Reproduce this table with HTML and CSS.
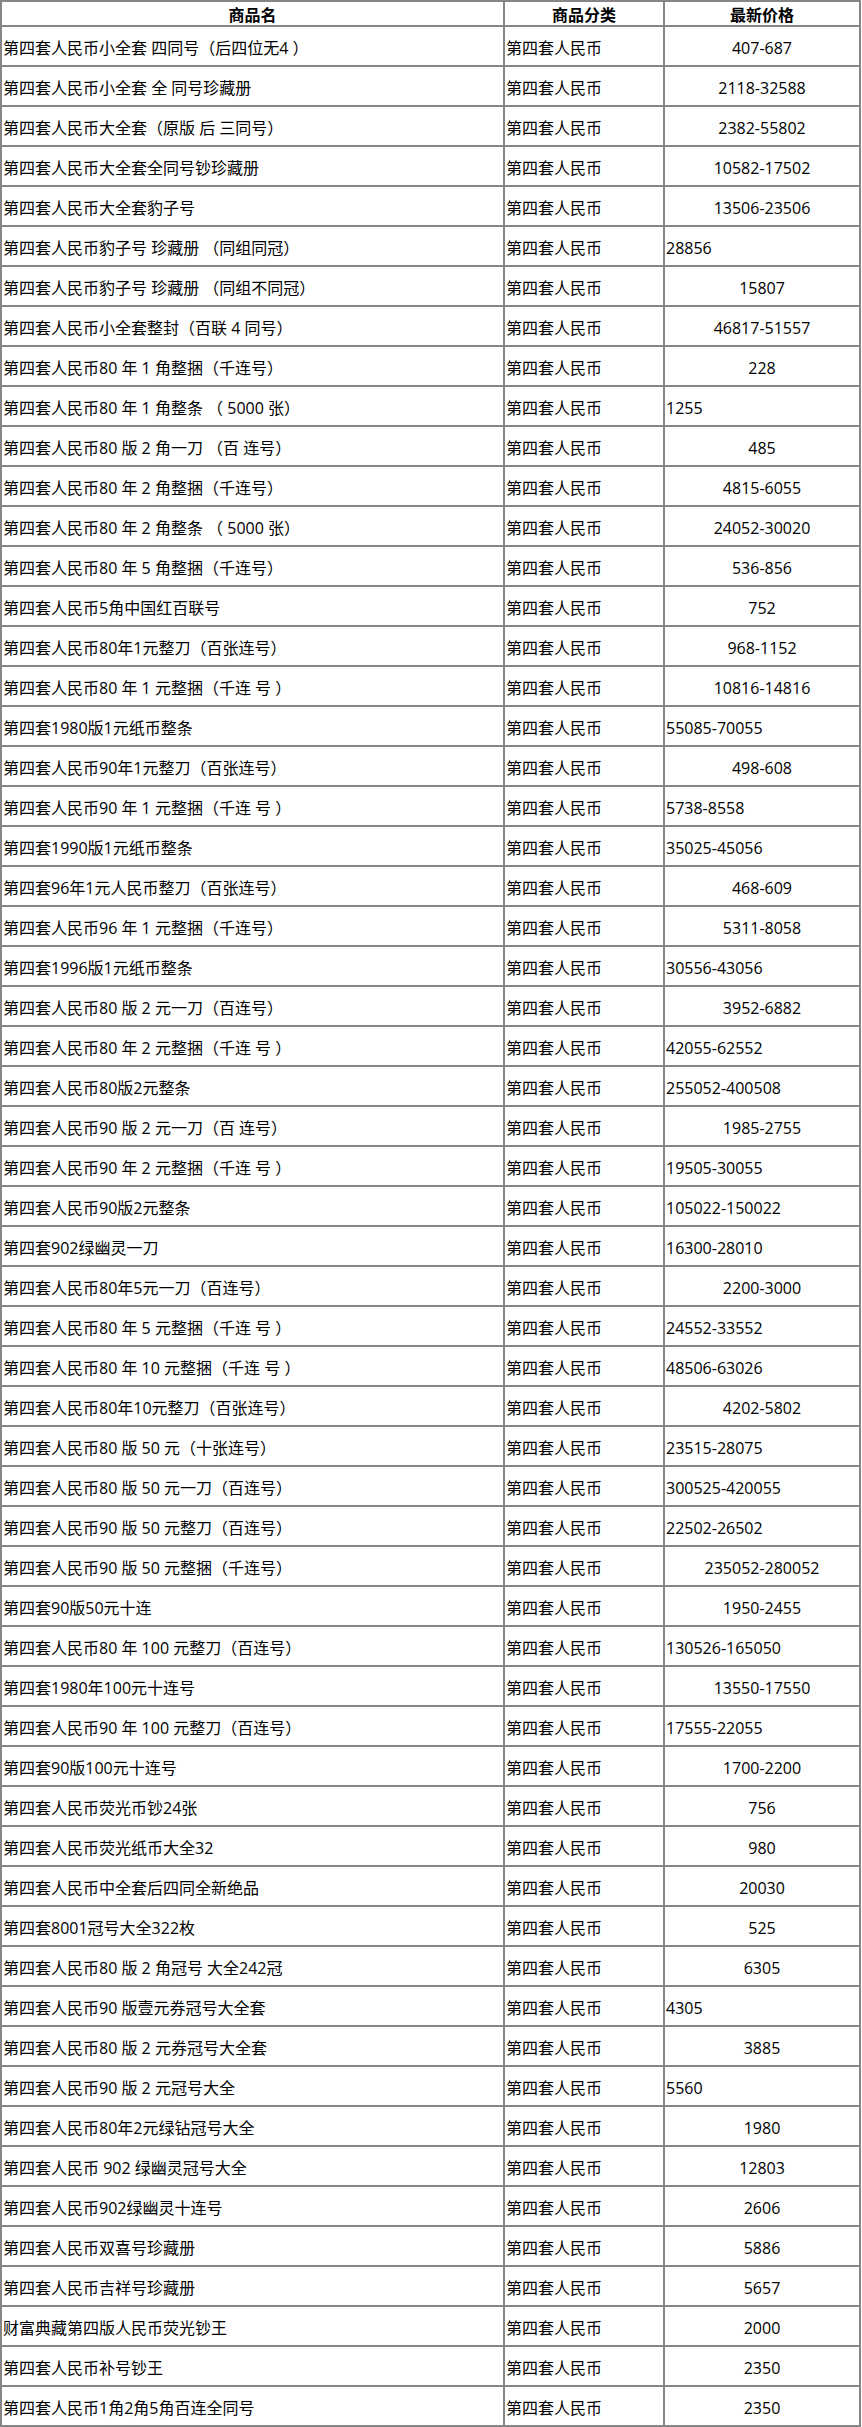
FILE: index.html
```html
<!DOCTYPE html>
<html lang="zh-CN">
<head>
<meta charset="utf-8">
<title>第四套人民币价格</title>
<link rel="stylesheet" href="styles.css">
</head>
<body>
<table class="price-table">
<thead>
<tr><th class="c-name">商品名</th><th class="c-cat">商品分类</th><th class="c-price">最新价格</th></tr>
</thead>
<tbody>
<tr><td>第四套人民币小全套 四同号（后四位无4 ）</td><td>第四套人民币</td><td class="p">407-687</td></tr>
<tr><td>第四套人民币小全套 全 同号珍藏册</td><td>第四套人民币</td><td class="p">2118-32588</td></tr>
<tr><td>第四套人民币大全套（原版 后 三同号）</td><td>第四套人民币</td><td class="p">2382-55802</td></tr>
<tr><td>第四套人民币大全套全同号钞珍藏册</td><td>第四套人民币</td><td class="p">10582-17502</td></tr>
<tr><td>第四套人民币大全套豹子号</td><td>第四套人民币</td><td class="p">13506-23506</td></tr>
<tr><td>第四套人民币豹子号 珍藏册 （同组同冠）</td><td>第四套人民币</td><td class="p l">28856</td></tr>
<tr><td>第四套人民币豹子号 珍藏册 （同组不同冠）</td><td>第四套人民币</td><td class="p">15807</td></tr>
<tr><td>第四套人民币小全套整封（百联 4 同号）</td><td>第四套人民币</td><td class="p">46817-51557</td></tr>
<tr><td>第四套人民币80 年 1 角整捆（千连号）</td><td>第四套人民币</td><td class="p">228</td></tr>
<tr><td>第四套人民币80 年 1 角整条 （ 5000 张）</td><td>第四套人民币</td><td class="p l">1255</td></tr>
<tr><td>第四套人民币80 版 2 角一刀 （百 连号）</td><td>第四套人民币</td><td class="p">485</td></tr>
<tr><td>第四套人民币80 年 2 角整捆（千连号）</td><td>第四套人民币</td><td class="p">4815-6055</td></tr>
<tr><td>第四套人民币80 年 2 角整条 （ 5000 张）</td><td>第四套人民币</td><td class="p">24052-30020</td></tr>
<tr><td>第四套人民币80 年 5 角整捆（千连号）</td><td>第四套人民币</td><td class="p">536-856</td></tr>
<tr><td>第四套人民币5角中国红百联号</td><td>第四套人民币</td><td class="p">752</td></tr>
<tr><td>第四套人民币80年1元整刀（百张连号）</td><td>第四套人民币</td><td class="p">968-1152</td></tr>
<tr><td>第四套人民币80 年 1 元整捆（千连 号 ）</td><td>第四套人民币</td><td class="p">10816-14816</td></tr>
<tr><td>第四套1980版1元纸币整条</td><td>第四套人民币</td><td class="p l">55085-70055</td></tr>
<tr><td>第四套人民币90年1元整刀（百张连号）</td><td>第四套人民币</td><td class="p">498-608</td></tr>
<tr><td>第四套人民币90 年 1 元整捆（千连 号 ）</td><td>第四套人民币</td><td class="p l">5738-8558</td></tr>
<tr><td>第四套1990版1元纸币整条</td><td>第四套人民币</td><td class="p l">35025-45056</td></tr>
<tr><td>第四套96年1元人民币整刀（百张连号）</td><td>第四套人民币</td><td class="p">468-609</td></tr>
<tr><td>第四套人民币96 年 1 元整捆（千连号）</td><td>第四套人民币</td><td class="p">5311-8058</td></tr>
<tr><td>第四套1996版1元纸币整条</td><td>第四套人民币</td><td class="p l">30556-43056</td></tr>
<tr><td>第四套人民币80 版 2 元一刀（百连号）</td><td>第四套人民币</td><td class="p">3952-6882</td></tr>
<tr><td>第四套人民币80 年 2 元整捆（千连 号 ）</td><td>第四套人民币</td><td class="p l">42055-62552</td></tr>
<tr><td>第四套人民币80版2元整条</td><td>第四套人民币</td><td class="p l">255052-400508</td></tr>
<tr><td>第四套人民币90 版 2 元一刀（百 连号）</td><td>第四套人民币</td><td class="p">1985-2755</td></tr>
<tr><td>第四套人民币90 年 2 元整捆（千连 号 ）</td><td>第四套人民币</td><td class="p l">19505-30055</td></tr>
<tr><td>第四套人民币90版2元整条</td><td>第四套人民币</td><td class="p l">105022-150022</td></tr>
<tr><td>第四套902绿幽灵一刀</td><td>第四套人民币</td><td class="p l">16300-28010</td></tr>
<tr><td>第四套人民币80年5元一刀（百连号）</td><td>第四套人民币</td><td class="p">2200-3000</td></tr>
<tr><td>第四套人民币80 年 5 元整捆（千连 号 ）</td><td>第四套人民币</td><td class="p l">24552-33552</td></tr>
<tr><td>第四套人民币80 年 10 元整捆（千连 号 ）</td><td>第四套人民币</td><td class="p l">48506-63026</td></tr>
<tr><td>第四套人民币80年10元整刀（百张连号）</td><td>第四套人民币</td><td class="p">4202-5802</td></tr>
<tr><td>第四套人民币80 版 50 元（十张连号）</td><td>第四套人民币</td><td class="p l">23515-28075</td></tr>
<tr><td>第四套人民币80 版 50 元一刀（百连号）</td><td>第四套人民币</td><td class="p l">300525-420055</td></tr>
<tr><td>第四套人民币90 版 50 元整刀（百连号）</td><td>第四套人民币</td><td class="p l">22502-26502</td></tr>
<tr><td>第四套人民币90 版 50 元整捆（千连号）</td><td>第四套人民币</td><td class="p">235052-280052</td></tr>
<tr><td>第四套90版50元十连</td><td>第四套人民币</td><td class="p">1950-2455</td></tr>
<tr><td>第四套人民币80 年 100 元整刀（百连号）</td><td>第四套人民币</td><td class="p l">130526-165050</td></tr>
<tr><td>第四套1980年100元十连号</td><td>第四套人民币</td><td class="p">13550-17550</td></tr>
<tr><td>第四套人民币90 年 100 元整刀（百连号）</td><td>第四套人民币</td><td class="p l">17555-22055</td></tr>
<tr><td>第四套90版100元十连号</td><td>第四套人民币</td><td class="p">1700-2200</td></tr>
<tr><td>第四套人民币荧光币钞24张</td><td>第四套人民币</td><td class="p">756</td></tr>
<tr><td>第四套人民币荧光纸币大全32</td><td>第四套人民币</td><td class="p">980</td></tr>
<tr><td>第四套人民币中全套后四同全新绝品</td><td>第四套人民币</td><td class="p">20030</td></tr>
<tr><td>第四套8001冠号大全322枚</td><td>第四套人民币</td><td class="p">525</td></tr>
<tr><td>第四套人民币80 版 2 角冠号 大全242冠</td><td>第四套人民币</td><td class="p">6305</td></tr>
<tr><td>第四套人民币90 版壹元券冠号大全套</td><td>第四套人民币</td><td class="p l">4305</td></tr>
<tr><td>第四套人民币80 版 2 元券冠号大全套</td><td>第四套人民币</td><td class="p">3885</td></tr>
<tr><td>第四套人民币90 版 2 元冠号大全</td><td>第四套人民币</td><td class="p l">5560</td></tr>
<tr><td>第四套人民币80年2元绿钻冠号大全</td><td>第四套人民币</td><td class="p">1980</td></tr>
<tr><td>第四套人民币 902 绿幽灵冠号大全</td><td>第四套人民币</td><td class="p">12803</td></tr>
<tr><td>第四套人民币902绿幽灵十连号</td><td>第四套人民币</td><td class="p">2606</td></tr>
<tr><td>第四套人民币双喜号珍藏册</td><td>第四套人民币</td><td class="p">5886</td></tr>
<tr><td>第四套人民币吉祥号珍藏册</td><td>第四套人民币</td><td class="p">5657</td></tr>
<tr><td>财富典藏第四版人民币荧光钞王</td><td>第四套人民币</td><td class="p">2000</td></tr>
<tr><td>第四套人民币补号钞王</td><td>第四套人民币</td><td class="p">2350</td></tr>
<tr><td>第四套人民币1角2角5角百连全同号</td><td>第四套人民币</td><td class="p">2350</td></tr>
</tbody>
</table>
</body>
</html>
```

FILE: styles.css
```css
html, body {
  margin: 0;
  padding: 0;
  background: #ffffff;
}

body {
  font-family: "Open Sans", "Noto Sans CJK SC", sans-serif;
  font-size: 16px;
  color: #000000;
}

.price-table {
  table-layout: fixed;
  border-collapse: separate;
  border-spacing: 0;
  width: 861px;
  border-top: 2px solid #868686;
  border-left: 2px solid #868686;
}

.price-table th,
.price-table td {
  box-sizing: border-box;
  border-right: 2px solid #868686;
  border-bottom: 2px solid #868686;
  padding: 0 1px;
  white-space: nowrap;
  overflow: hidden;
}

.price-table th {
  height: 25px;
  font-weight: bold;
  text-align: center;
  vertical-align: middle;
  line-height: 20px;
  padding-top: 2px;
}

.c-name { width: 503px; }
.c-cat { width: 160px; }
.c-price { width: 196px; }

.price-table td {
  height: 40px;
  text-align: left;
  vertical-align: middle;
  line-height: 22px;
  padding-top: 3px;
}

.price-table td.p {
  text-align: center;
}

.price-table td.p.l {
  text-align: left;
}
```
